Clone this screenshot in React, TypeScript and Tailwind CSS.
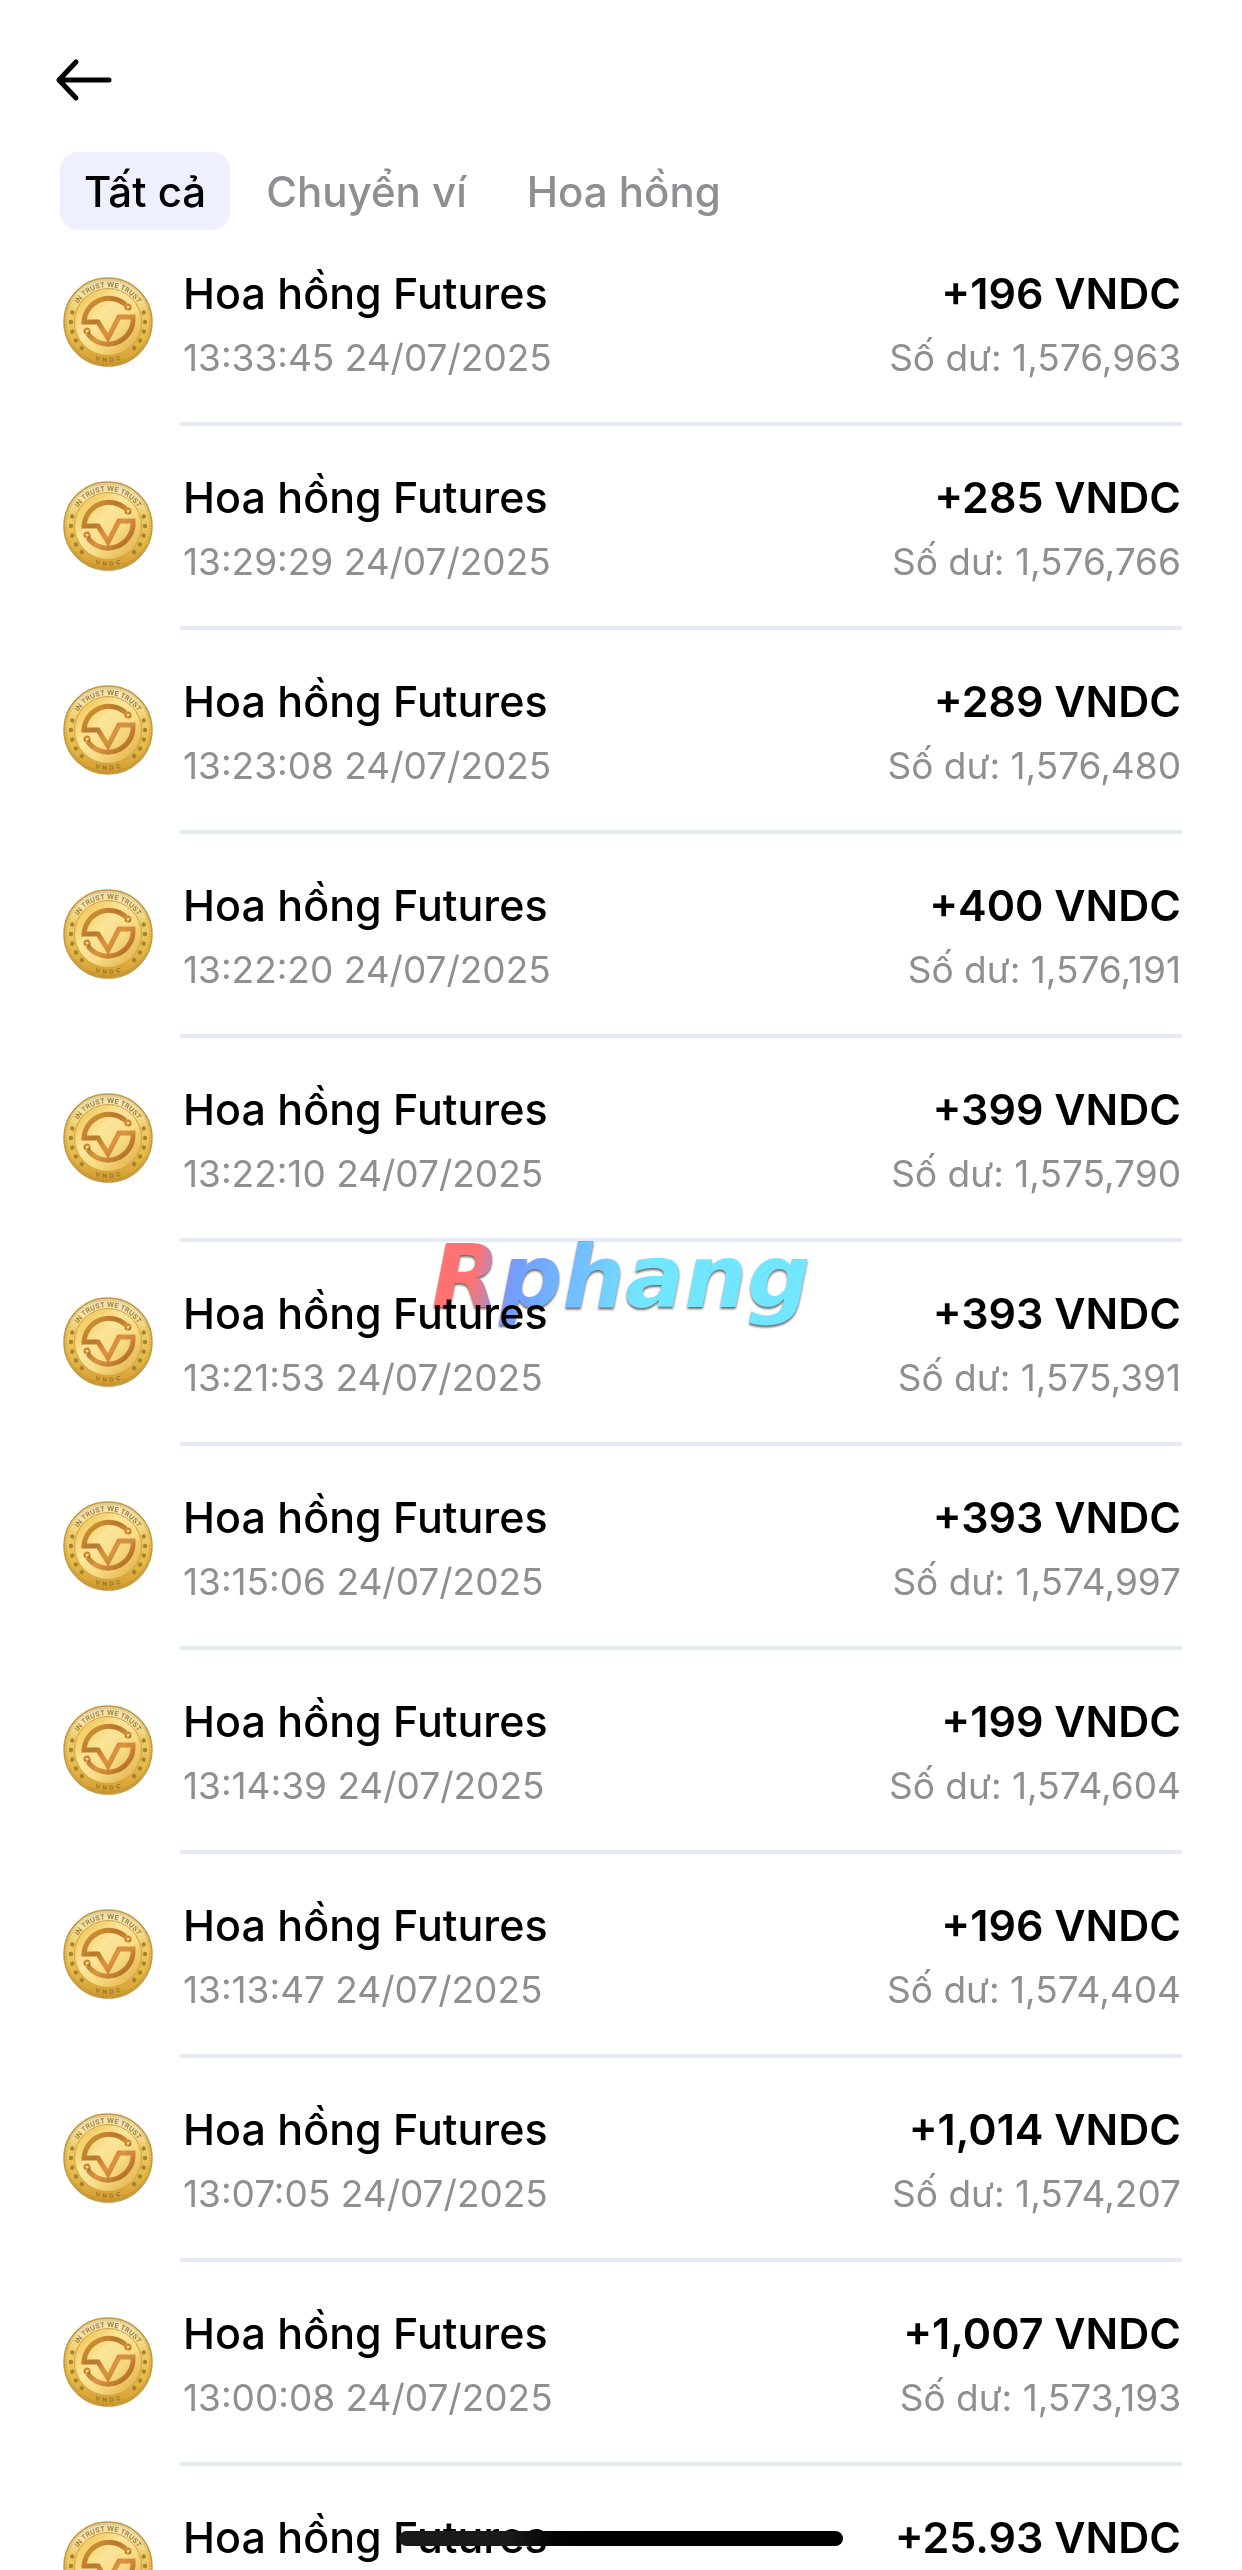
import { useId, useState } from "react";

const tabs = ["Tất cả", "Chuyển ví", "Hoa hồng"];

type Transaction = { amount: string; time?: string; balance?: string };

const transactions: Transaction[] = [
  { time: "13:33:45 24/07/2025", amount: "+196", balance: "1,576,963" },
  { time: "13:29:29 24/07/2025", amount: "+285", balance: "1,576,766" },
  { time: "13:23:08 24/07/2025", amount: "+289", balance: "1,576,480" },
  { time: "13:22:20 24/07/2025", amount: "+400", balance: "1,576,191" },
  { time: "13:22:10 24/07/2025", amount: "+399", balance: "1,575,790" },
  { time: "13:21:53 24/07/2025", amount: "+393", balance: "1,575,391" },
  { time: "13:15:06 24/07/2025", amount: "+393", balance: "1,574,997" },
  { time: "13:14:39 24/07/2025", amount: "+199", balance: "1,574,604" },
  { time: "13:13:47 24/07/2025", amount: "+196", balance: "1,574,404" },
  { time: "13:07:05 24/07/2025", amount: "+1,014", balance: "1,574,207" },
  { time: "13:00:08 24/07/2025", amount: "+1,007", balance: "1,573,193" },
  { amount: "+25.93" },
];

// angles (degrees, 0 = right, clockwise) of the dots stamped on the rim
const rimDots = [-15, 0, 15, 30, 45, 135, 150, 165, 180, 195];

function Coin() {
  const id = useId();
  return (
    <svg viewBox="0 0 90 90" className="size-[90px] shrink-0" aria-hidden="true">
      <defs>
        <linearGradient id={`${id}rim`} x1="0" y1="0" x2="0" y2="1">
          <stop offset="0" stopColor="#e9dcae" />
          <stop offset="0.15" stopColor="#f6e9b8" />
          <stop offset="0.35" stopColor="#efcf6c" />
          <stop offset="0.7" stopColor="#e6b947" />
          <stop offset="1" stopColor="#cf9a30" />
        </linearGradient>
        <linearGradient id={`${id}face`} x1="0" y1="0" x2="1" y2="1">
          <stop offset="0" stopColor="#edbd45" />
          <stop offset="0.4" stopColor="#fbe59a" />
          <stop offset="0.6" stopColor="#f8dd88" />
          <stop offset="1" stopColor="#dfa73c" />
        </linearGradient>
        <linearGradient id={`${id}mark`} x1="0" y1="0" x2="1" y2="1">
          <stop offset="0" stopColor="#d79a34" />
          <stop offset="0.35" stopColor="#b8782a" />
          <stop offset="0.6" stopColor="#dd9440" />
          <stop offset="1" stopColor="#a5651a" />
        </linearGradient>
        <path id={`${id}top`} d="M10 45a35 35 0 0 1 70 0" />
        <path id={`${id}bottom`} d="M5 45a40 40 0 0 0 80 0" />
      </defs>
      <circle cx="45" cy="45" r="44" fill={`url(#${id}rim)`} stroke="#c39a45" strokeWidth="1.5" />
      <circle cx="45" cy="45" r="42" fill="none" stroke="#a9741f" strokeOpacity="0.4" strokeWidth="1.5" strokeDasharray="1 1" />
      <circle cx="45" cy="45" r="33.500" fill={`url(#${id}face)`} stroke="#d2a044" strokeWidth="1" />
      {rimDots.map((deg) => (
        <circle key={deg} cx="82" cy="45" r="2.2" fill="#a9822f" transform={`rotate(${deg} 45 45)`} />
      ))}
      <g fill="#a8823a" fontFamily="Inter, sans-serif" fontWeight="700">
        <text fontSize="7">
          <textPath href={`#${id}top`} startOffset="50%" textAnchor="middle">
            IN TRUST WE TRUST
          </textPath>
        </text>
        <text fontSize="6" fill="#a06f22" xmlSpace="preserve">
          <textPath href={`#${id}bottom`} startOffset="50%" textAnchor="middle">
            V  N  D  C
          </textPath>
        </text>
      </g>
      <g fill="none" stroke={`url(#${id}mark)`} strokeWidth="5">
        <path d="M63 28A25 25 0 0 0 21 45H35L45 61L56 40H70A25 25 0 0 1 25 57" />
        <circle cx="65" cy="30" r="2.5" strokeWidth="2" fill="#f3d377" />
        <circle cx="24" cy="54" r="2.5" strokeWidth="2" fill="#f3d377" />
      </g>
    </svg>
  );
}

function Row({ time, amount, balance }: Transaction) {
  return (
    <li className="flex gap-[27px] pb-[42px] last:pb-0">
      <div className="pt-[13px]">
        <Coin />
      </div>
      <div className="flex h-[162px] min-w-0 flex-1 justify-between border-b-4 border-[#e4ebf4] pr-px pl-[3px] whitespace-nowrap">
        <div>
          <p className="text-[43px] leading-[58px] font-medium text-black">Hoa hồng Futures</p>
          {time && <p className="pt-[6px] text-[37px] leading-[60px] text-[#8e8e93]">{time}</p>}
        </div>
        <div className="text-right">
          <p className="text-[43px] leading-[58px] font-semibold text-black">{amount} VNDC</p>
          {balance && <p className="pt-[6px] text-[37px] leading-[60px] text-[#8e8e93]">Số dư: {balance}</p>}
        </div>
      </div>
    </li>
  );
}

export default function App() {
  const [active, setActive] = useState(tabs[0]);

  return (
    <div className="relative h-screen overflow-hidden bg-white font-[Inter,sans-serif]">
      <header className="px-[54px] pt-[50px]">
        <button type="button" aria-label="Quay lại" className="block">
          <svg viewBox="0 0 60 60" className="size-[60px]" fill="none" stroke="#000" strokeWidth="5" strokeLinecap="round" strokeLinejoin="round">
            <path d="M55 30H5M22 12L5 30L22 48" />
          </svg>
        </button>
      </header>

      <nav className="flex gap-[12px] px-[60px] pt-[42px]">
        {tabs.map((tab) => (
          <button
            key={tab}
            type="button"
            onClick={() => setActive(tab)}
            className={
              tab === active
                ? "h-[78px] rounded-[18px] bg-[#eff0fe] px-[24px] text-[42px] font-medium text-black"
                : "h-[78px] rounded-[18px] px-[24px] text-[42px] font-medium text-[#8e8e93]"
            }
          >
            {tab}
          </button>
        ))}
      </nav>

      <ul className="pt-[34px] pr-[60px] pl-[63px]">
        {transactions.map((item, i) => (
          <Row key={i} {...item} />
        ))}
      </ul>

      <div className="pointer-events-none absolute inset-x-0 top-[1222px] flex justify-center mix-blend-multiply">
        <span className="bg-[linear-gradient(100deg,#ff7272_14%,#739cff_24%,#72bbff_38%,#73e6ff_56%)] bg-clip-text px-2 font-['DejaVu_Sans'] text-[88px] leading-[110px] font-bold text-transparent italic drop-shadow-[0_2px_1px_rgba(0,0,0,0.6)]">
          Rphang
        </span>
      </div>

      <div className="absolute bottom-[24px] left-1/2 h-[15px] w-[444px] -translate-x-1/2 rounded-full bg-linear-to-r from-[#1a1a1a] from-25% to-black to-45%" />
    </div>
  );
}
